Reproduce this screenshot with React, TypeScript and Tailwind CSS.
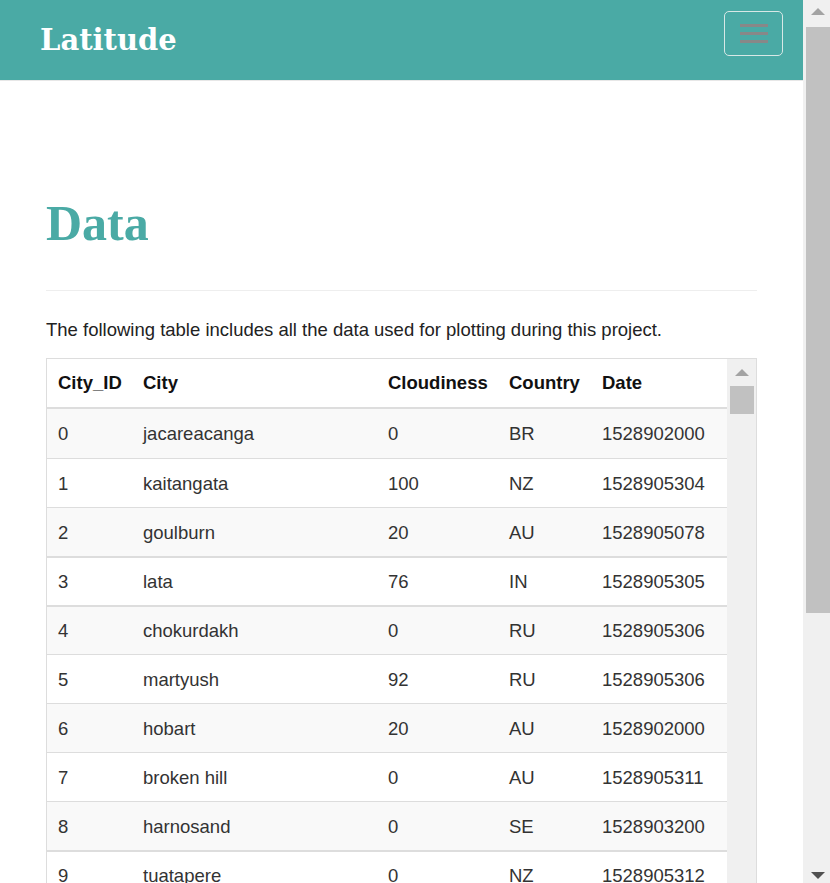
import React from "react";

const rows = [
  ["0", "jacareacanga", "0", "BR", "1528902000"],
  ["1", "kaitangata", "100", "NZ", "1528905304"],
  ["2", "goulburn", "20", "AU", "1528905078"],
  ["3", "lata", "76", "IN", "1528905305"],
  ["4", "chokurdakh", "0", "RU", "1528905306"],
  ["5", "martyush", "92", "RU", "1528905306"],
  ["6", "hobart", "20", "AU", "1528902000"],
  ["7", "broken hill", "0", "AU", "1528905311"],
  ["8", "harnosand", "0", "SE", "1528903200"],
  ["9", "tuatapere", "0", "NZ", "1528905312"],
  ["10", "ushuaia", "40", "AR", "1528902000"],
];

const thick = new Set([3, 4, 9]);

export default function App() {
  return (
    <div className="flex h-screen w-full overflow-hidden bg-white" style={{ fontFamily: '"Liberation Sans", Arial, sans-serif' }}>
      <div className="flex-1 min-w-0 overflow-hidden">
        <nav className="h-[81px] bg-[#4aaaa5] border-b border-[#e7e7e7] flex items-start justify-between pl-[40px] pr-[20px]">
          <div
            className="text-white font-bold text-[29px] leading-[29px] mt-[26px]"
            style={{ fontFamily: '"DejaVu Serif", Georgia, serif' }}
          >
            Latitude
          </div>
          <button className="mt-[11px] w-[59px] h-[45px] rounded-[5px] border border-[#d8e8e6] flex flex-col items-center justify-center gap-[5px]">
            <span className="block w-[28px] h-[3px] bg-[#888888]" />
            <span className="block w-[28px] h-[3px] bg-[#888888]" />
            <span className="block w-[28px] h-[3px] bg-[#888888]" />
          </button>
        </nav>
        <main className="px-[46px]">
          <h1
            className="mt-[115px] text-[50px] leading-[55px] font-bold text-[#4aaaa5]"
            style={{ fontFamily: '"Liberation Serif", Georgia, serif' }}
          >
            Data
          </h1>
          <hr className="mt-[39px] border-0 border-t border-[#eeeeee]" />
          <p className="mt-[26px] text-[18.5px] leading-[26px] text-[#222]">
            The following table includes all the data used for plotting during this project.
          </p>
          <div className="mt-[15px] border border-[#dddddd] flex h-[600px]">
            <div className="w-[680px] overflow-hidden">
              <div className="w-[680px] text-[18.5px] text-[#333]">
                <div className="flex h-[50px] items-center border-b-2 border-[#dddddd] font-bold text-[#111]">
                  <div className="w-[85px] pl-[11px]">City_ID</div>
                  <div className="w-[245px] pl-[11px]">City</div>
                  <div className="w-[121px] pl-[11px]">Cloudiness</div>
                  <div className="w-[93px] pl-[11px]">Country</div>
                  <div className="w-[125px] pl-[11px]">Date</div>
                </div>
                {rows.map((r, i) => (
                  <div
                    key={i}
                    className={
                      "flex h-[49px] items-center border-[#dddddd] pt-[1px] " +
                      (i === 0 ? "" : thick.has(i) ? "border-t-2 " : "border-t ") +
                      (i % 2 === 0 ? "bg-[#f9f9f9]" : "bg-white")
                    }
                  >
                    <div className="w-[85px] pl-[11px]">{r[0]}</div>
                    <div className="w-[245px] pl-[11px]">{r[1]}</div>
                    <div className="w-[121px] pl-[11px]">{r[2]}</div>
                    <div className="w-[93px] pl-[11px]">{r[3]}</div>
                    <div className="w-[125px] pl-[11px]">{r[4]}</div>
                  </div>
                ))}
              </div>
            </div>
            <div className="w-[29px] bg-[#f0f0f0] flex flex-col items-center">
              <div className="mt-[10px] w-0 h-0 border-l-[7px] border-r-[7px] border-b-[7px] border-l-transparent border-r-transparent border-b-[#a3a3a3]" />
              <div className="mt-[10px] w-[24px] h-[28px] bg-[#c1c1c1]" />
            </div>
          </div>
        </main>
      </div>
      <div className="w-[27px] h-full bg-[#f0f0f0] flex flex-col items-end relative">
        <div className="w-[24px] flex justify-center mt-[8px]">
          <div className="w-0 h-0 border-l-[7px] border-r-[7px] border-b-[7px] border-l-transparent border-r-transparent border-b-[#a3a3a3]" />
        </div>
        <div className="mt-[12px] w-[24px] h-[586px] bg-[#c1c1c1]" />
        <div className="flex-1" />
        <div className="w-[24px] flex justify-center mb-[4px]">
          <div className="w-0 h-0 border-l-[7px] border-r-[7px] border-t-[7px] border-l-transparent border-r-transparent border-t-[#505050]" />
        </div>
      </div>
    </div>
  );
}
